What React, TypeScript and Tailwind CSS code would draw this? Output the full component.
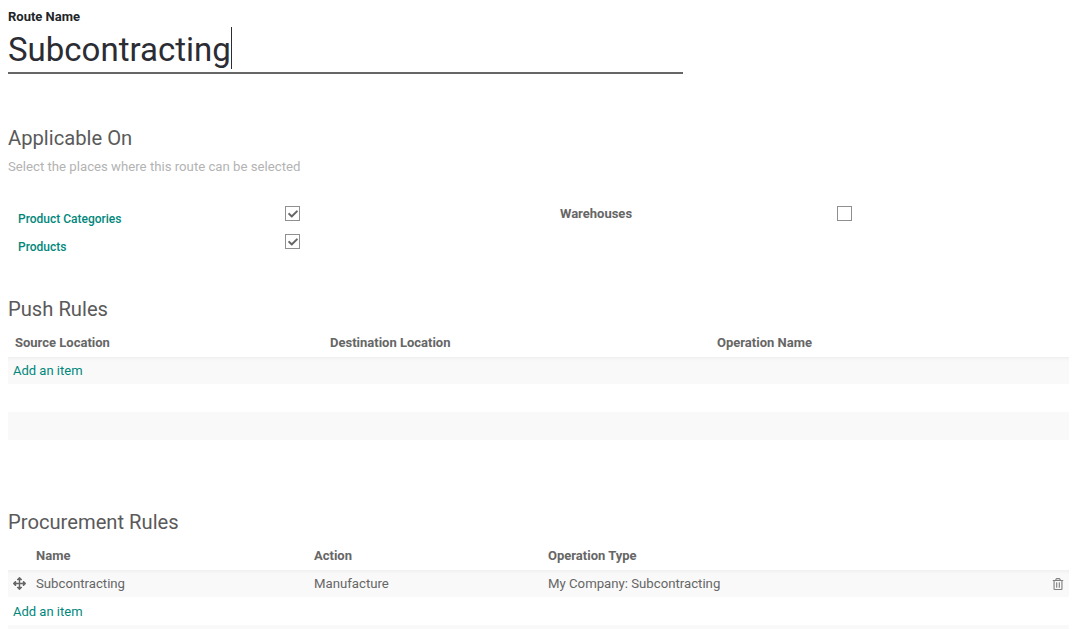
import { FaArrowsAlt, FaCheck, FaRegTrashAlt } from 'react-icons/fa';

function SectionTitle({ children }: { children: string }) {
  return <h2 className="text-[20.2px] leading-[28px] text-[#5a5a5a]">{children}</h2>;
}

function Checkbox({ checked }: { checked?: boolean }) {
  return (
    <div className="flex h-[15px] w-[15px] items-center justify-center border border-[#8f8f8f] bg-white">
      {checked && <FaCheck size={10} className="text-[#666666]" />}
    </div>
  );
}

export default function App() {
  return (
    <div className="h-[629px] w-[1079px] overflow-hidden bg-white pl-2 pr-[10px] font-['Roboto',sans-serif] text-[13.2px] text-[#4c4c4c]">
      <div className="pt-[9px] pb-px text-[13px] font-bold leading-[15px] text-[#212529]">Route Name</div>
      <div className="flex h-[49px] w-[675px] items-start border-b-2 border-[#666666] pt-[2px]">
        <span className="relative top-[2px] text-[33px] leading-[42px] text-[#2c2d34]">Subcontracting</span>
        <span className="h-[42px] w-px bg-[#2c2d34]"></span>
      </div>

      <div className="pt-[50px]">
        <SectionTitle>Applicable On</SectionTitle>
      </div>
      <p className="pt-[6px] text-[13.2px] leading-[18px] text-[#b3b3b3]">Select the places where this route can be selected</p>

      <div className="mt-[30px] flex">
        <div className="flex w-[552px] flex-col gap-[7px] pl-[10px]">
          <div className="flex items-start">
            <span className="mt-[6px] w-[267px] text-[12px] font-medium leading-[15px] text-[#00877c]">Product Categories</span>
            <Checkbox checked />
          </div>
          <div className="flex items-start">
            <span className="mt-[6px] w-[267px] text-[12px] font-medium leading-[15px] text-[#00877c]">Products</span>
            <Checkbox checked />
          </div>
        </div>
        <div className="flex items-start">
          <span className="w-[277px] text-[13px] font-bold leading-[15px] text-[#666666]">Warehouses</span>
          <Checkbox />
        </div>
      </div>

      <div className="pt-[40px]">
        <SectionTitle>Push Rules</SectionTitle>
      </div>
      <div className="mt-[6px] flex h-[28px] items-center text-[13px] font-bold text-[#666666]">
        <span className="w-[322px] pl-[7px]">Source Location</span>
        <span className="w-[387px]">Destination Location</span>
        <span>Operation Name</span>
      </div>
      <div className="flex h-[27px] items-center bg-[#f9f9f9] pl-[5px] text-[13px] text-[#00877c] shadow-[inset_0_4px_4px_-3px_rgba(0,0,0,0.06)]">Add an item</div>
      <div className="h-[28px]"></div>
      <div className="h-[28px] bg-[#f9f9f9]"></div>

      <div className="pt-[68px]">
        <SectionTitle>Procurement Rules</SectionTitle>
      </div>
      <div className="mt-[6px] flex h-[28px] items-center pl-[28px] text-[13px] font-bold text-[#666666]">
        <span className="w-[278px]">Name</span>
        <span className="w-[234px]">Action</span>
        <span>Operation Type</span>
      </div>
      <div className="flex h-[27px] items-center bg-[#f9f9f9] text-[#666666] shadow-[inset_0_4px_4px_-3px_rgba(0,0,0,0.06)]">
        <span className="flex w-[28px] justify-start pl-[5px]">
          <FaArrowsAlt size={13} className="text-[#666666]" />
        </span>
        <span className="w-[278px]">Subcontracting</span>
        <span className="w-[234px]">Manufacture</span>
        <span className="flex-1">My Company: Subcontracting</span>
        <FaRegTrashAlt size={12} className="mr-[5px] text-[#808080]" />
      </div>
      <div className="flex h-[28px] items-center pl-[5px] pt-[2px] text-[13px] text-[#00877c]">Add an item</div>
      <div className="h-[28px] bg-[#f9f9f9]"></div>
    </div>
  );
}
